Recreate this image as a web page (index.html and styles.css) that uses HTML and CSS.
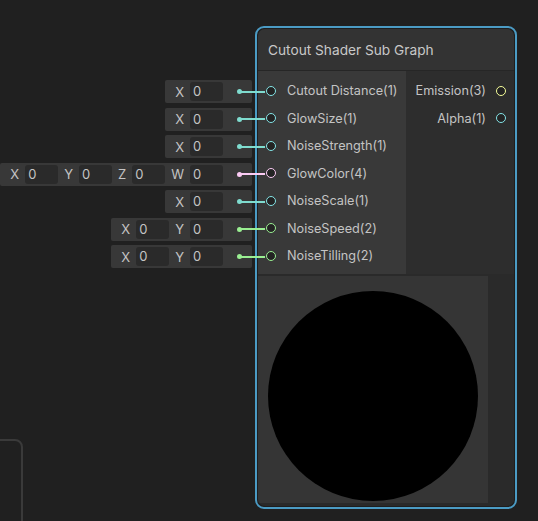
FILE: index.html
```html
<!DOCTYPE html>
<html>
<head>
<meta charset="utf-8">
<link rel="stylesheet" href="styles.css">
</head>
<body>
<div class="canvas">
  <div class="graph">
    <div class="fields">
      <div class="frow"><div class="box float"><span class="lbl">X</span><span class="fld">0</span><span class="dot"></span></div></div>
      <div class="frow"><div class="box float"><span class="lbl">X</span><span class="fld">0</span><span class="dot"></span></div></div>
      <div class="frow"><div class="box float"><span class="lbl">X</span><span class="fld">0</span><span class="dot"></span></div></div>
      <div class="frow"><div class="box vec4"><span class="lbl">X</span><span class="fld">0</span><span class="lbl">Y</span><span class="fld">0</span><span class="lbl">Z</span><span class="fld">0</span><span class="lbl">W</span><span class="fld">0</span><span class="dot"></span></div></div>
      <div class="frow"><div class="box float"><span class="lbl">X</span><span class="fld">0</span><span class="dot"></span></div></div>
      <div class="frow"><div class="box vec2"><span class="lbl">X</span><span class="fld">0</span><span class="lbl">Y</span><span class="fld">0</span><span class="dot"></span></div></div>
      <div class="frow"><div class="box vec2"><span class="lbl">X</span><span class="fld">0</span><span class="lbl">Y</span><span class="fld">0</span><span class="dot"></span></div></div>
    </div>
    <div class="node">
      <div class="inner">
        <div class="title">Cutout Shader Sub Graph</div>
        <div class="ports">
          <div class="inputs">
            <div class="port float"><span class="ring"></span><span class="pname">Cutout Distance(1)</span></div>
            <div class="port float"><span class="ring"></span><span class="pname">GlowSize(1)</span></div>
            <div class="port float"><span class="ring"></span><span class="pname">NoiseStrength(1)</span></div>
            <div class="port vec4"><span class="ring"></span><span class="pname">GlowColor(4)</span></div>
            <div class="port float"><span class="ring"></span><span class="pname">NoiseScale(1)</span></div>
            <div class="port vec2"><span class="ring"></span><span class="pname">NoiseSpeed(2)</span></div>
            <div class="port vec2"><span class="ring"></span><span class="pname">NoiseTilling(2)</span></div>
          </div>
          <div class="outputs">
            <div class="port out vec3"><span class="pname">Emission(3)</span><span class="ring"></span></div>
            <div class="port out float"><span class="pname">Alpha(1)</span><span class="ring"></span></div>
          </div>
        </div>
        <div class="previewrow">
          <div class="preview"><div class="ball"></div></div>
          <div class="strip"></div>
        </div>
      </div>
    </div>
  </div>
  <div class="ghost"></div>
</div>
</body>
</html>
```

FILE: styles.css
```css
* { box-sizing: border-box; }
html, body { margin: 0; padding: 0; background: #202020; }
body { font-family: Inter, "Noto Sans", sans-serif; color: #c4c4c4; }

.canvas {
  position: relative;
  width: 538px;
  height: 521px;
  overflow: hidden;
  background: #202020;
}

.graph {
  display: flex;
  padding-top: 26px;
}

.fields {
  position: relative;
  z-index: 2;
  width: 255px;
  padding-top: 52px;
  display: flex;
  flex-direction: column;
  align-items: flex-end;
}

.frow {
  height: 27.5px;
  display: flex;
  align-items: center;
  padding-right: 3px;
}

.box {
  height: 23px;
  display: flex;
  align-items: center;
  background: #383838;
  border-radius: 2px;
  padding-left: 4px;
  padding-right: 10px;
  font-size: 13px;
}

.lbl {
  padding: 0 6px;
  color: #c4c4c4;
}

.fld {
  width: 33px;
  height: 19px;
  background: #2a2a2a;
  border-radius: 3px;
  padding-left: 3px;
  line-height: 19px;
  color: #c4c4c4;
}

.dot {
  position: relative;
  width: 5px;
  height: 5px;
  border-radius: 50%;
  margin-left: 14px;
  background: var(--pc);
}
.dot::after {
  content: "";
  position: absolute;
  left: 3px;
  top: 1.5px;
  width: 25px;
  height: 2px;
  background: var(--pc);
}

.float { --pc: #84e4e7; }
.vec4 { --pc: #fbcbf4; }
.vec2 { --pc: #9aef92; }
.vec3 { --pc: #f6ff9a; }
.float .dot, .float .dot::after { background: #7fdccf; }

.node {
  width: 262px;
  height: 483px;
  border: 2px solid #4b9bc4;
  border-radius: 9px;
  padding: 1px;
  background: #1e1e1e;
}

.inner {
  height: 100%;
  border-radius: 7px;
  overflow: hidden;
  background: #2a2a2a;
  display: flex;
  flex-direction: column;
}

.title {
  height: 42px;
  background: #333333;
  border-bottom: 1px solid #262626;
  padding-left: 10px;
  display: flex;
  align-items: center;
  font-size: 13.7px;
  color: #c8c8c8;
  padding-top: 1px;
}

.ports {
  display: flex;
  height: 203px;
}

.inputs {
  width: 148px;
  background: #393939;
  padding-top: 6px;
}

.outputs {
  flex: 1;
  background: #2d2d2d;
  padding-top: 6px;
}

.port {
  height: 27.5px;
  display: flex;
  align-items: center;
  font-size: 12.7px;
  color: #c4c4c4;
}

.inputs .port { padding-left: 8px; }
.inputs .ring { margin-right: 11px; }

.out { justify-content: flex-end; padding-right: 8px; }
.out .ring { margin-left: 10px; }

.ring {
  width: 10px;
  height: 10px;
  border-radius: 50%;
  border: 1.5px solid var(--pc);
  background: #232323;
  flex: none;
}

.previewrow {
  flex: 1;
  display: flex;
  margin-top: 2px;
  margin-bottom: 3px;
}

.preview {
  width: 230px;
  background: #353535;
  padding: 15px 0 0 10px;
}

.ball {
  width: 210px;
  height: 210px;
  border-radius: 50%;
  background: #000;
}

.strip {
  flex: 1;
  background: #2a2a2a;
}

.ghost {
  position: absolute;
  left: -100px;
  top: 439px;
  width: 123px;
  height: 200px;
  border: 2px solid #3a3a3a;
  border-radius: 8px;
}
```
